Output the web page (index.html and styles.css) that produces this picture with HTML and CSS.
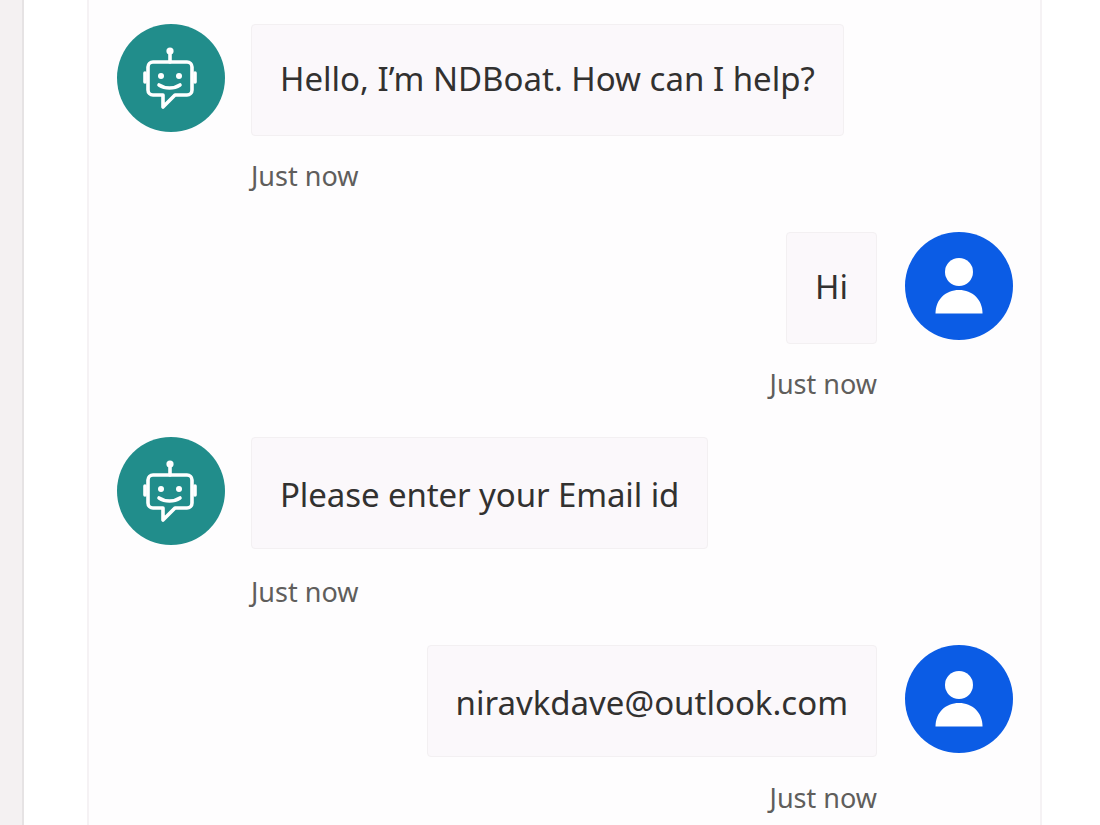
FILE: index.html

```html
<!DOCTYPE html>
<html lang="en">
<head>
  <meta charset="UTF-8" />
  <title>NDBoat chat</title>
  <meta name="viewport" content="width=device-width, initial-scale=1.0" />
  <link rel="stylesheet" href="styles.css">
</head>
<body>

  <svg class="defs" width="0" height="0" aria-hidden="true">
    <symbol id="bot" viewBox="0 0 108 108">
      <g fill="none" stroke="#fff" stroke-width="3.6" stroke-linecap="round" stroke-linejoin="round">
        <path d="M53 28v10"/>
        <path d="M36 38h34a5 5 0 0 1 5 5v23a5 5 0 0 1-5 5H58L46 83v-12H36a5 5 0 0 1-5-5V43a5 5 0 0 1 5-5z"/>
        <path d="M28 49v9"/>
        <path d="M78 49v9"/>
        <path d="M42 61c6 4 15 4 21 0"/>
      </g>
      <circle cx="53" cy="27" r="3.600" fill="#fff"/>
      <circle cx="44" cy="52" r="3" fill="#fff"/>
      <circle cx="62" cy="52" r="3" fill="#fff"/>
    </symbol>
    <symbol id="user" viewBox="0 0 108 108">
      <circle cx="54" cy="40" r="14" fill="#fff"/>
      <path d="M30.500 81.500c0-14 10-23.500 23.500-23.500s23.500 9.500 23.500 23.500z" fill="#fff"/>
    </symbol>
  </svg>

  <div class="rail"></div>

  <div class="main">
    <div class="chat">

      <div class="msg">
        <div class="avatar bot"><svg><use href="#bot"/></svg></div>
        <div class="content">
          <div class="bubble">Hello, I’m NDBoat. How can I help?</div>
          <div class="time">Just now</div>
        </div>
      </div>

      <div class="msg me">
        <div class="content">
          <div class="bubble">Hi</div>
          <div class="time">Just now</div>
        </div>
        <div class="avatar person"><svg><use href="#user"/></svg></div>
      </div>

      <div class="msg late">
        <div class="avatar bot"><svg><use href="#bot"/></svg></div>
        <div class="content">
          <div class="bubble tight">Please enter your Email id</div>
          <div class="time">Just now</div>
        </div>
      </div>

      <div class="msg me late">
        <div class="content">
          <div class="bubble">niravkdave@outlook.com</div>
          <div class="time">Just now</div>
        </div>
        <div class="avatar person"><svg><use href="#user"/></svg></div>
      </div>

    </div>
  </div>

</body>
</html>
```

FILE: styles.css

```css
body {
  margin: 0;
  display: flex;
  height: 825px;
  overflow: hidden;
  background-color: #fff;
  color: #323130;
  font-family: "Noto Sans", "Open Sans", sans-serif;
}
.defs {
  position: absolute;
}
.rail {
  width: 22px;
  background-color: #f4f1f2;
  border-right: 2px solid #e6e3e4;
}
.main {
  flex: 1;
  padding-left: 63px;
}
.chat {
  width: 896px;
  height: 801px;
  padding: 24px 27px 0 28px;
  background-color: #fefdfe;
  border-left: 2px solid #f5f2f4;
  border-right: 2px solid #f5f2f4;
}
.msg {
  display: flex;
  gap: 26px;
  height: 208px;
}
.msg.me {
  justify-content: flex-end;
  gap: 28px;
  height: 205px;
}
.avatar {
  flex: none;
  width: 108px;
  height: 108px;
  border-radius: 50%;
}
.avatar svg {
  display: block;
  width: 108px;
  height: 108px;
}
.bot {
  background-color: #218d8b;
}
.person {
  background-color: #0b5ce5;
}
.content {
  display: flex;
  flex-direction: column;
  align-items: flex-start;
}
.me .content {
  align-items: flex-end;
}
.bubble {
  height: 110px;
  line-height: 108px;
  padding: 0 28px;
  font-size: 33px;
  white-space: nowrap;
  background-color: #fbf8fb;
  border: 1px solid #f3f0f2;
  border-radius: 4px;
}
.late .bubble {
  line-height: 114px;
}
.tight {
  letter-spacing: -0.1px;
}
.time {
  margin-top: 22px;
  line-height: 36px;
  font-size: 27px;
  color: #605e5c;
}
.late .time {
  margin-top: 25px;
}
.me.late .time {
  margin-top: 23px;
}
```
